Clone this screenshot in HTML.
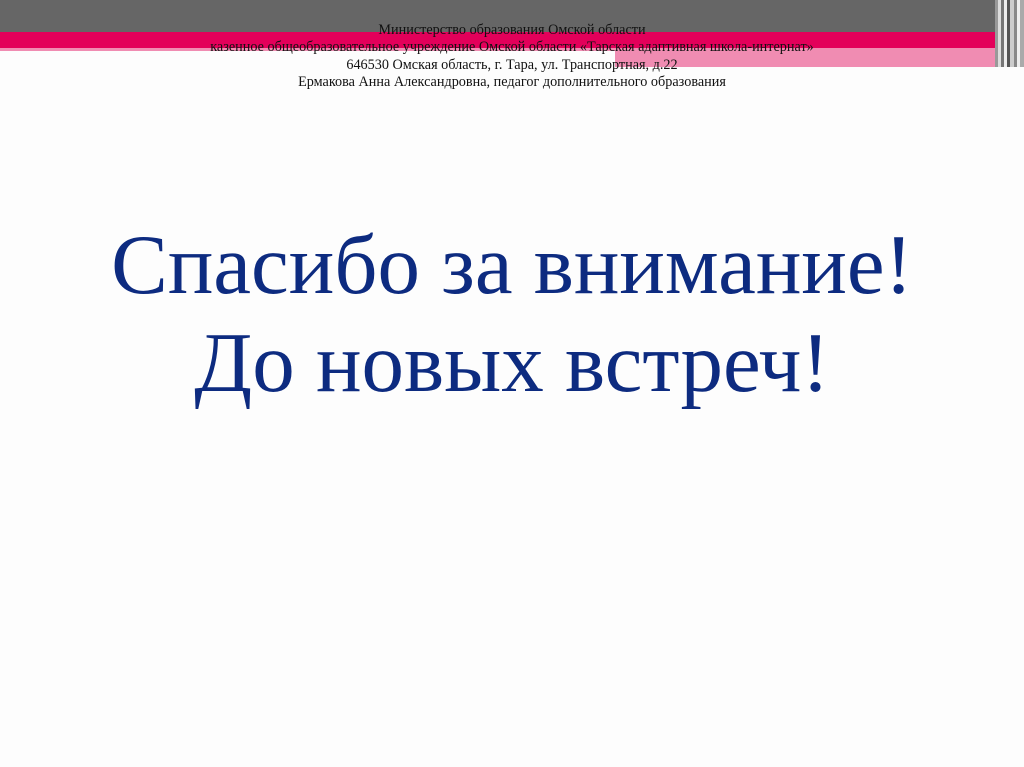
<!DOCTYPE html>
<html><head><meta charset="utf-8"><style>
body{margin:0;width:1024px;height:767px;background:#fdfdfd;position:relative;overflow:hidden;font-family:"Liberation Serif",serif}
.a{position:absolute}
.hdr{position:absolute;top:22px;left:0;width:1024px;text-align:center;font-size:14.5px;line-height:17.3px;color:#111;transform:scaleX(0.98)}
.t{position:absolute;left:0;width:1024px;text-align:center;color:#0d2b80;font-size:85px;line-height:98px;top:216px}
</style></head><body>
<div class="a" style="left:0;top:0;width:1000px;height:32px;background:#666"></div>
<div class="a" style="left:0;top:32px;width:1000px;height:16px;background:#e3005a"></div>
<div class="a" style="left:0;top:48px;width:1000px;height:3px;background:#f08cb2"></div>
<div class="a" style="left:615px;top:48px;width:385px;height:19px;background:#f08cb2"></div>
<div class="a" style="left:995px;top:0;width:29px;height:67px;background:linear-gradient(90deg,#999 0,#999 3px,#ddd 3px,#ddd 6px,#777 6px,#777 9px,#eee 9px,#eee 12px,#555 12px,#555 15px,#ccc 15px,#ccc 19px,#888 19px,#888 22px,#eee 22px,#eee 25px,#aaa 25px)"></div>
<div class="hdr">Министерство образования Омской области<br>казенное общеобразовательное учреждение Омской области «Тарская адаптивная школа-интернат»<br>646530 Омская область, г. Тара, ул. Транспортная, д.22<br>Ермакова Анна Александровна, педагог дополнительного образования</div>
<div class="t">Спасибо за внимание!<br>До новых встреч!</div>
</body></html>
